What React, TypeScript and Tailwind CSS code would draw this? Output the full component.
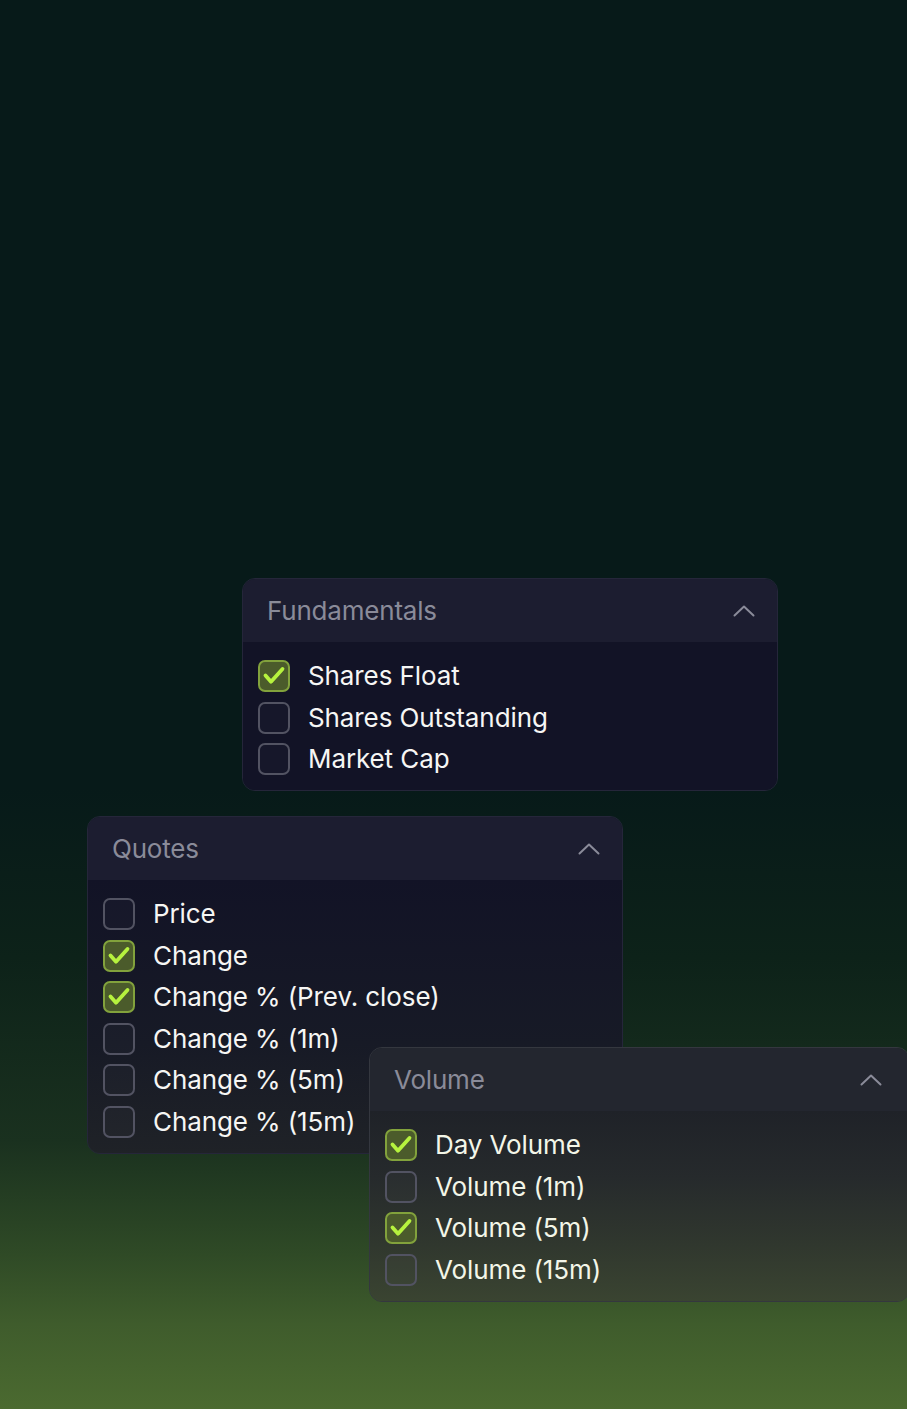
import React from "react";

type Item = { label: string; checked: boolean };

const FUNDAMENTALS: Item[] = [
  { label: "Shares Float", checked: true },
  { label: "Shares Outstanding", checked: false },
  { label: "Market Cap", checked: false },
];

const QUOTES: Item[] = [
  { label: "Price", checked: false },
  { label: "Change", checked: true },
  { label: "Change % (Prev. close)", checked: true },
  { label: "Change % (1m)", checked: false },
  { label: "Change % (5m)", checked: false },
  { label: "Change % (15m)", checked: false },
];

const VOLUME: Item[] = [
  { label: "Day Volume", checked: true },
  { label: "Volume (1m)", checked: false },
  { label: "Volume (5m)", checked: true },
  { label: "Volume (15m)", checked: false },
];

function Checkbox({ checked }: { checked: boolean }) {
  return (
    <span
      className={
        "relative size-8 shrink-0 rounded-[7px] border-2 " +
        (checked
          ? "border-[#82a23c] bg-[#4b5b2b]"
          : "border-[#525362] bg-white/[0.02]")
      }
    >
      {checked ? (
        <svg
          viewBox="0 0 28 28"
          className="absolute inset-0 size-7"
          fill="none"
        >
          <path
            d="M5.5 13.5l5.5 6.2L22.5 7"
            stroke="#b6f23e"
            strokeWidth="3.8"
            strokeLinecap="round"
            strokeLinejoin="round"
          />
        </svg>
      ) : null}
    </span>
  );
}

function ChevronUp() {
  return (
    <svg viewBox="0 0 22 12" className="h-3 w-[22px]" fill="none">
      <path
        d="M1.5 10.5L11 1.5l9.5 9"
        stroke="#8a8b99"
        strokeWidth="2"
        strokeLinecap="round"
        strokeLinejoin="round"
      />
    </svg>
  );
}

/** A collapsible column group — header with title and chevron, list of checkboxes. */
function Group({
  title,
  items,
  className,
  headerClass,
  bodyClass,
  textClass = "text-[#f6f6f4]",
}: {
  title: string;
  items: Item[];
  className: string;
  headerClass: string;
  bodyClass: string;
  textClass?: string;
}) {
  return (
    <div
      className={
        "absolute flex w-[536px] flex-col overflow-hidden rounded-[13px] border " +
        className
      }
    >
      <div
        className={
          "flex h-[63px] items-center justify-between pl-6 pr-[22px] " +
          headerClass
        }
      >
        <span className="text-[26px] leading-none tracking-[-0.2px] text-[#8a8b99]">
          {title}
        </span>
        <ChevronUp />
      </div>
      <div
        className={
          "flex flex-col gap-[9.5px] pb-[15px] pl-[15px] pt-[18px] " + bodyClass
        }
      >
        {items.map((item) => (
          <div key={item.label} className="flex h-8 items-center gap-[18px]">
            <Checkbox checked={item.checked} />
            <span
              className={
                "text-[26px] leading-none tracking-[-0.1px] " + textClass
              }
            >
              {item.label}
            </span>
          </div>
        ))}
      </div>
    </div>
  );
}

export default function App() {
  return (
    <div
      className="relative h-[1409px] w-full overflow-hidden bg-[linear-gradient(180deg,#071a19_0%,#071a19_56%,#0d2219_68%,#1a311f_81%,#2f4a26_89%,#3f5c2c_94%,#4b6a30_100%)]"
      style={{ fontFamily: "Inter, 'Noto Sans', sans-serif" }}
    >
      <Group
        title="Fundamentals"
        items={FUNDAMENTALS}
        className="left-[242px] top-[578px] border-[#25263a]"
        headerClass="bg-[#1c1d30]"
        bodyClass="bg-[#121326]"
      />
      <Group
        title="Quotes"
        items={QUOTES}
        className="left-[87px] top-[816px] border-[#25263a]"
        headerClass="bg-[#1c1d30]"
        bodyClass="bg-[linear-gradient(180deg,#121326_0%,#171a26_60%,#1f2227_100%)]"
      />
      <Group
        title="Volume"
        items={VOLUME}
        className="left-[369px] top-[1047px] border-[#34373f] !w-[541px]"
        headerClass="bg-[#23262f] !pr-[27px]"
        bodyClass="bg-[linear-gradient(180deg,#1f2228_0%,#262a2c_35%,#30372e_70%,#3a4431_100%)] pt-[17px]"
        textClass="text-[#f3f6e8]"
      />
    </div>
  );
}
